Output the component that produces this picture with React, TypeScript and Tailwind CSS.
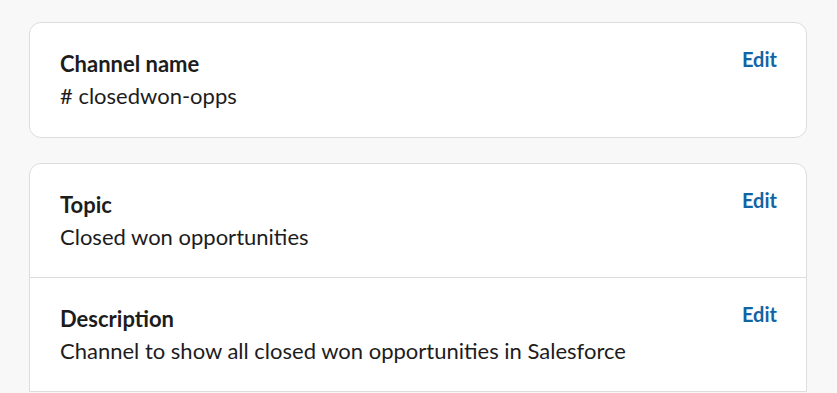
import React from "react";

type Row = { label: string; value: string };

const FieldRow = ({
  label,
  value,
  divider,
  roomy,
}: Row & { divider?: boolean; roomy?: boolean }) => (
  <div
    className={`flex items-start justify-between pl-[30px] pr-[29px] pt-[25px] ${
      roomy ? "pb-[25px]" : "pb-[24px]"
    } ${divider ? "border-t border-[#dddddd]" : ""}`}
  >
    <div className="flex flex-col">
      <span className="text-[22px] font-bold leading-[32px] text-[#1d1c1d]">{label}</span>
      <span className="text-[22px] leading-[32px] text-[#1d1c1d]">{value}</span>
    </div>
    <button className="text-[20px] font-bold leading-[23px] text-[#1264a3]">Edit</button>
  </div>
);

const App = () => {
  const about: Row[] = [
    { label: "Topic", value: "Closed won opportunities" },
    { label: "Description", value: "Channel to show all closed won opportunities in Salesforce" },
  ];

  return (
    <div
      className="min-h-screen bg-[#f8f8f8] pl-[29px] pr-[30px] pt-[22px]"
      style={{ fontFamily: "Lato, 'Noto Sans', sans-serif" }}
    >
      <div className="rounded-[12px] border border-[#dddddd] bg-white">
        <FieldRow label="Channel name" value="# closedwon-opps" roomy />
      </div>

      <div className="mt-[25px] rounded-t-[12px] border border-[#dddddd] bg-white">
        {about.map((r, i) => (
          <FieldRow key={r.label} {...r} divider={i > 0} />
        ))}
      </div>
    </div>
  );
};

export default App;
